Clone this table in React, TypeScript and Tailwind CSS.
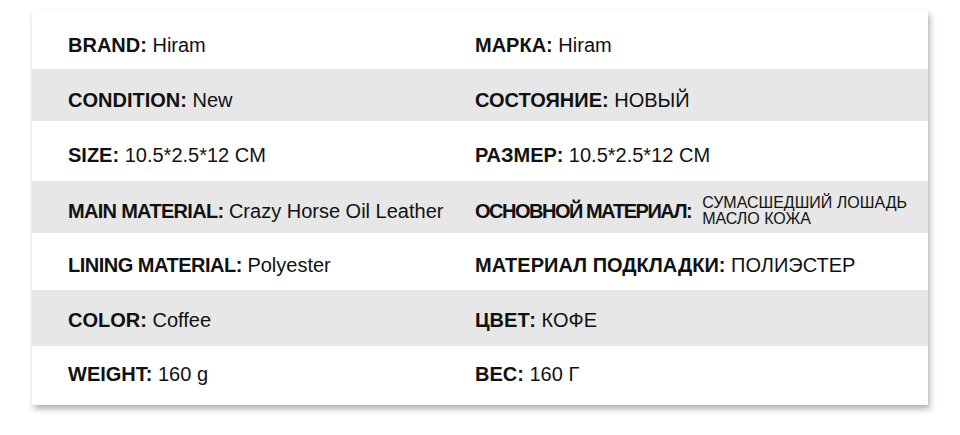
const rows = [
  {
    cls: "h-[59px] pt-[25px] bg-white",
    en: ["BRAND:", "Hiram"],
    ru: ["МАРКА:", "Hiram"],
  },
  {
    cls: "h-[52px] pt-[21px] bg-[#e7e7e7]",
    en: ["CONDITION:", "New"],
    ru: ["СОСТОЯНИЕ:", "НОВЫЙ"],
  },
  {
    cls: "h-[60px] pt-[24px] bg-white",
    en: ["SIZE:", "10.5*2.5*12 CM"],
    ru: ["РАЗМЕР:", "10.5*2.5*12 CM"],
  },
  {
    cls: "h-[52px] pt-[20px] bg-[#e7e7e7]",
    en: ["MAIN MATERIAL:", "Crazy Horse Oil Leather"],
    ru: ["ОСНОВНОЙ МАТЕРИАЛ:", ""],
  },
  {
    cls: "h-[57px] pt-[22px] bg-white",
    en: ["LINING MATERIAL:", "Polyester"],
    ru: ["МАТЕРИАЛ ПОДКЛАДКИ:", "ПОЛИЭСТЕР"],
  },
  {
    cls: "h-[56px] pt-[20px] bg-[#e7e7e7]",
    en: ["COLOR:", "Coffee"],
    ru: ["ЦВЕТ:", "КОФЕ"],
  },
  {
    cls: "h-[59px] pt-[18px] bg-white",
    en: ["WEIGHT:", "160 g"],
    ru: ["ВЕС:", "160 Г"],
  },
];

function Cell({ label, value, track }: { label: string; value: string; track?: string }) {
  return (
    <div className="whitespace-nowrap px-9 leading-5">
      <span className={`font-bold ${track ?? ""}`}>{label}</span> <span>{value}</span>
    </div>
  );
}

export default function App() {
  return (
    <div className="min-h-[435px] bg-white pt-[10px] font-['Liberation_Sans',Arial,sans-serif] text-[20px] text-[#111]">
      <div className="ml-[32px] w-[896px] bg-white shadow-[2px_4px_6px_rgba(0,0,0,0.3)]">
        {rows.map((r, i) => (
          <div key={i} className={`grid grid-cols-[407px_1fr] ${r.cls}`}>
            <Cell
              label={r.en[0]}
              value={r.en[1]}
              track={i === 3 ? "tracking-[-0.7px]" : i === 4 ? "tracking-[-0.5px]" : ""}
            />
            {i === 3 ? (
              <div className="-mt-[12px] flex items-center gap-[11px] whitespace-nowrap px-9">
                <span className="font-bold tracking-[-1.5px]">{r.ru[0]}</span>
                <span className="text-[16px] leading-4">
                  СУМАСШЕДШИЙ ЛОШАДЬ
                  <br />
                  МАСЛО КОЖА
                </span>
              </div>
            ) : (
              <Cell label={r.ru[0]} value={r.ru[1]} />
            )}
          </div>
        ))}
      </div>
    </div>
  );
}
